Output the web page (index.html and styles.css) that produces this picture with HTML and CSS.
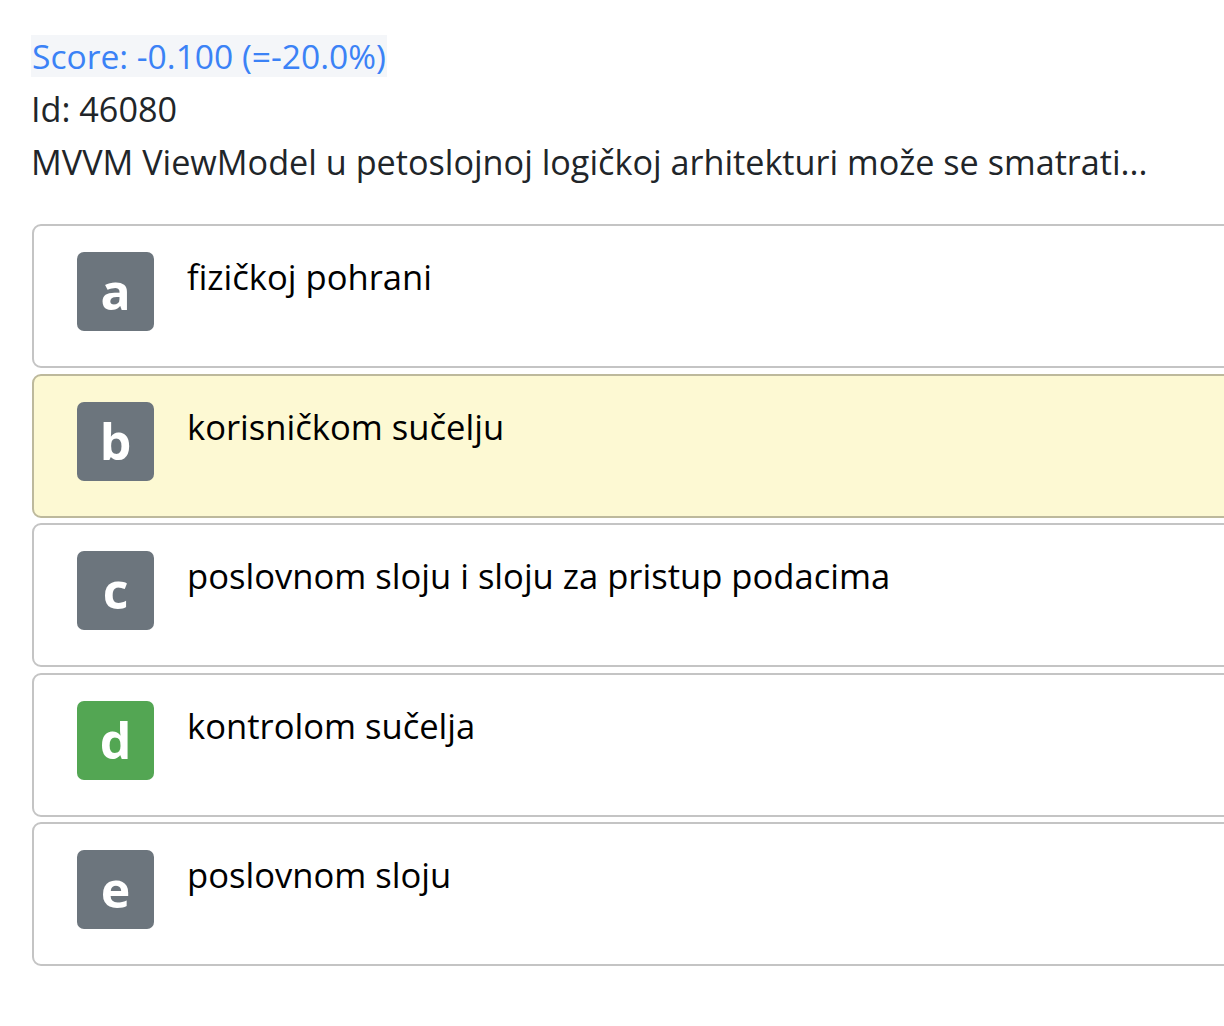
FILE: index.html
```html
<!DOCTYPE html>
<html lang="hr">
<head>
<meta charset="utf-8">
<title>Pitanje 46080</title>
<link rel="stylesheet" href="styles.css">
</head>
<body>
<div class="page">
  <div class="score-line"><span class="score">Score: -0.100 (=-20.0%)</span></div>
  <div class="meta">Id: 46080</div>
  <div class="question">MVVM ViewModel u petoslojnoj logičkoj arhitekturi može se smatrati...</div>
  <div class="answers">
    <div class="answer"><span class="badge">a</span><span class="answer-text">fizičkoj pohrani</span></div>
    <div class="answer selected"><span class="badge">b</span><span class="answer-text">korisničkom sučelju</span></div>
    <div class="answer"><span class="badge">c</span><span class="answer-text">poslovnom sloju i sloju za pristup podacima</span></div>
    <div class="answer"><span class="badge correct">d</span><span class="answer-text">kontrolom sučelja</span></div>
    <div class="answer"><span class="badge">e</span><span class="answer-text">poslovnom sloju</span></div>
  </div>
</div>
</body>
</html>
```
FILE: styles.css
```css
html, body {
  margin: 0;
  padding: 0;
  overflow: hidden;
  background: #ffffff;
}
body {
  font-family: "Open Sans", "Noto Sans", sans-serif;
  color: #212529;
}
.page {
  padding: 29px 0 0 31px;
}
.score-line {
  height: 53px;
  display: flex;
  align-items: center;
}
.score {
  display: inline-block;
  height: 42px;
  line-height: 42px;
  font-size: 33.6px;
  color: #3b82f6;
  background: #f4f6f9;
  padding: 0 1px;
}
.meta, .question {
  font-size: 34.2px;
  line-height: 53px;
}
.answers {
  margin-top: 36px;
  margin-left: 1px;
  display: flex;
  flex-direction: column;
  gap: 5.5px;
}
.answer {
  width: 1260px;
  height: 144px;
  box-sizing: border-box;
  border: 2px solid #c4c4c4;
  border-radius: 9px;
  background: #ffffff;
  padding: 26px 0 0 43px;
  display: flex;
  align-items: flex-start;
  gap: 33px;
}
.answer.selected {
  background: #fdf9d3;
  border-color: #bdb99c;
}
.badge {
  flex: none;
  width: 77px;
  height: 79px;
  border-radius: 7px;
  background: #6c757d;
  color: #ffffff;
  font-weight: 700;
  font-size: 50px;
  line-height: 79px;
  text-align: center;
}
.badge.correct {
  background: #53a653;
}
.answer-text {
  font-size: 34.6px;
  line-height: 49px;
  color: #000000;
}
```
